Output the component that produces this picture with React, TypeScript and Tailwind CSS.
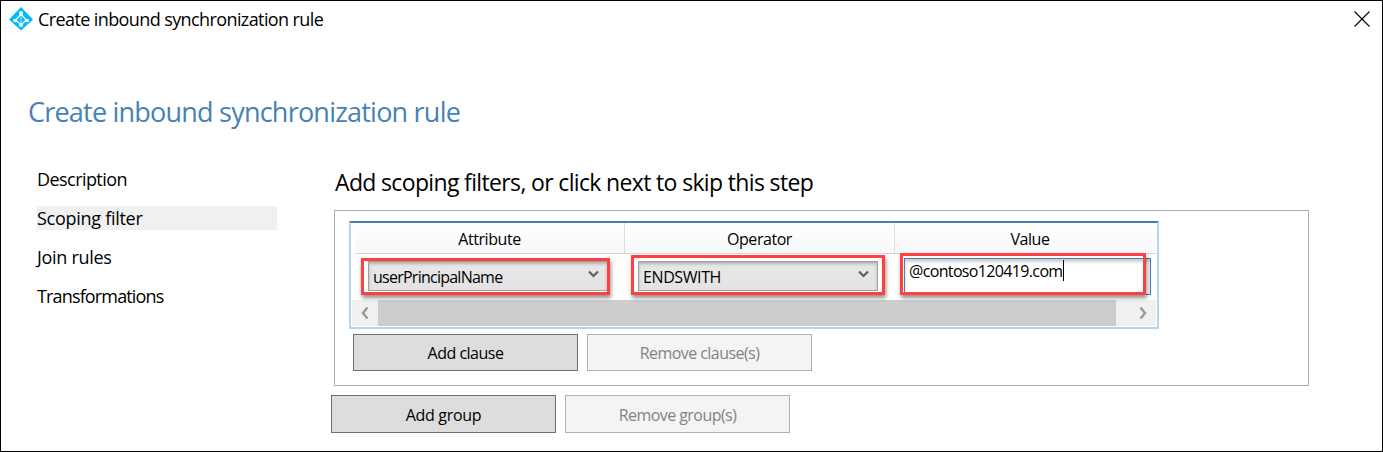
import React from "react";

const steps = [
  { label: "Description", track: "tracking-[-0.56px]" },
  { label: "Scoping filter", track: "tracking-[-0.28px]", active: true },
  { label: "Join rules", track: "tracking-[-0.3px]" },
  { label: "Transformations", track: "tracking-[-0.85px]" },
];

function Logo() {
  return (
    <svg width="24" height="24" viewBox="0 0 24 24" className="block">
      <path d="M12 0L24 12.5L12 23.5L0 12.5Z" fill="#00bcf2" />
      <path d="M12 6L5.5 13.5L12 18L18.5 13.5Z" fill="#fff" />
      <circle cx="12" cy="6" r="2" fill="#fff" />
      <circle cx="6" cy="13.5" r="1.8" fill="#fff" />
      <circle cx="18" cy="13.5" r="1.8" fill="#fff" />
      <circle cx="12" cy="18" r="2" fill="#fff" />
      <path d="M11.3 9V16L8 13Z" fill="#00bcf2" stroke="#00bcf2" strokeWidth=".6" />
      <path d="M12.7 9V16L16 13Z" fill="#00bcf2" stroke="#00bcf2" strokeWidth=".6" />
    </svg>
  );
}

function Combo({ children, track }: { children: React.ReactNode; track: string }) {
  return (
    <div className="flex h-[30px] w-[240px] items-center justify-between border border-[#a0a0a0] bg-linear-to-b from-[#e8e8e8] to-[#e3e3e3] pr-[8px] pl-[4px] shadow-[inset_0_2px_3px_#b0b0b0]">
      <span className={`pt-[1px] ${track}`}>{children}</span>
      <svg width="11" height="9" viewBox="0 0 11 9" className="mb-[4px]">
        <path d="M1 1.5L5.5 6L10 1.5" fill="none" stroke="#606060" strokeWidth="2.2" />
      </svg>
    </div>
  );
}

function Button({
  children,
  track,
  disabled = false,
  tall = false,
}: {
  children: React.ReactNode;
  track: string;
  disabled?: boolean;
  tall?: boolean;
}) {
  return (
    <button
      className={`flex w-[225px] items-center justify-center border text-[16px] ${track} ${tall ? "h-[38px] pt-[2px]" : "h-[37px] pt-[1px]"} ${
        disabled ? "border-[#adb2b5] bg-[#f4f4f4] text-[#838383]" : "border-[#707070] bg-[#dddddd] text-black"
      }`}
    >
      {children}
    </button>
  );
}

export default function App() {
  return (
    <div className="flex h-[452px] w-[1383px] flex-col border border-black bg-white font-['Open_Sans','Noto_Sans',sans-serif] leading-none whitespace-nowrap text-black">
      <header className="flex h-[36px] items-center justify-between pr-[12px] pl-[8px]">
        <div className="flex items-center gap-[5px]">
          <Logo />
          <h1 className="text-[18px] tracking-[-0.6px]">Create inbound synchronization rule</h1>
        </div>
        <svg width="16" height="16" viewBox="0 0 16 16">
          <path d="M.5 .5L15.5 15.5M15.5 .5L.5 15.5" stroke="#000" strokeWidth="1.1" />
        </svg>
      </header>

      <h2 className="mt-[61px] ml-[27px] h-[28px] text-[27px] leading-[28px] tracking-[-0.78px] text-[#4682b4]">
        Create inbound synchronization rule
      </h2>

      <div className="flex pt-[41px] pl-[36px]">
        <nav className="flex w-[240px] flex-col gap-[15px] text-[18px]">
          {steps.map((s) => (
            <div key={s.label} className={`h-[24px] leading-[25px] ${s.track} ${s.active ? "bg-[#f0f0f0]" : ""}`}>
              {s.label}
            </div>
          ))}
        </nav>

        <main className="ml-[54px] flex flex-col">
          <h3 className="ml-[4px] h-[43px] text-[23px] leading-[31px] tracking-[-0.65px]">
            Add scoping filters, or click next to skip this step
          </h3>

          <section className="ml-[3px] h-[176px] w-[975px] border border-[#abadb3] pt-[10px] pl-[14px]">
            <div className="h-[108px] w-[810px] border-2 border-[#b5d5e8] border-t-[#4a7eb0] text-[16px]">
              <div className="ml-[4px] flex h-[31px] w-[801px] border-b border-[#d5d5d5] bg-linear-to-b from-white to-[#f7f8fa] tracking-[-0.45px]">
                <div className="flex w-[270px] items-center justify-center border-r border-[#dddddd] pt-[1px]">Attribute</div>
                <div className="flex w-[270px] items-center justify-center border-r border-[#dddddd] pt-[1px]">Operator</div>
                <div className="flex flex-1 items-center justify-center pt-[1px] pl-[9px]">Value</div>
              </div>

              <div className="flex h-[46px] pl-[4px]">
                <div className="relative w-[270px] pt-[7px] pl-[13px]">
                  <Combo track="tracking-[-0.75px]">userPrincipalName</Combo>
                  <div className="absolute top-[4px] left-[6px] h-[37px] w-[249px] border-3 border-[#ff4040] shadow-[1px_3px_4px_#00000070]" />
                </div>
                <div className="relative w-[270px] pt-[7px] pl-[13px]">
                  <Combo track="tracking-[-0.4px]">ENDSWITH</Combo>
                  <div className="absolute top-[1px] left-[6px] h-[40px] w-[254px] border-3 border-[#ff4040] shadow-[1px_3px_4px_#00000070]" />
                </div>
                <div className="relative pt-[4px] pl-[9px]">
                  <div className="flex h-[37px] w-[247px] items-start border border-[#3c7fc5] bg-white pl-[4px] leading-[24px] shadow-[inset_0_3px_3px_#d0d0d0]">
                    <span className="tracking-[-0.65px]">@contoso120419.com</span>
                    <span className="mt-[1px] h-[21px] w-px bg-black" />
                  </div>
                  <div className="absolute top-[-1px] left-[5px] h-[42px] w-[246px] border-3 border-[#ff4040] shadow-[1px_3px_4px_#00000070]" />
                </div>
              </div>

              <div className="ml-px flex h-[26px] w-[804px] bg-[#f0f0f0]">
                <div className="flex w-[26px] items-center justify-center">
                  <svg width="8" height="12" viewBox="0 0 8 12">
                    <path d="M6.5 .5L2 6L6.5 11.5" fill="none" stroke="#999" strokeWidth="2.4" />
                  </svg>
                </div>
                <div className="w-[738px] bg-[#cdcdcd]" />
                <div className="flex flex-1 items-center justify-end pr-[9px]">
                  <svg width="8" height="12" viewBox="0 0 8 12">
                    <path d="M1.5 .5L6 6L1.5 11.5" fill="none" stroke="#999" strokeWidth="2.4" />
                  </svg>
                </div>
              </div>
            </div>

            <div className="mt-[5px] ml-[4px] flex gap-[9px]">
              <Button track="tracking-[-0.5px]">Add clause</Button>
              <Button track="tracking-[-0.55px]" disabled>Remove clause(s)</Button>
            </div>
          </section>

          <div className="mt-[9px] flex gap-[9px]">
            <Button track="tracking-[-0.3px]" tall>Add group</Button>
            <Button track="tracking-[-0.55px]" tall disabled>Remove group(s)</Button>
          </div>
        </main>
      </div>
    </div>
  );
}
